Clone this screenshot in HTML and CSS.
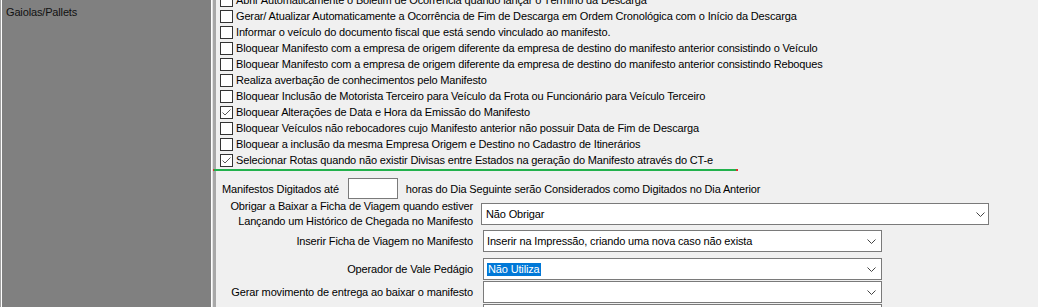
FILE: index.html
```html
<!DOCTYPE html>
<html lang="pt-BR">
<head>
    <meta charset="UTF-8">
    <title>Parâmetros do Manifesto</title>
    <link rel="stylesheet" href="styles.css">
</head>
<body>

    <div class="app">
        <aside class="sidebar">
            <div class="nav-item">Gaiolas/Pallets</div>
        </aside>
        <div class="splitter"></div>

        <main class="content">
            <div class="options">
                <label class="opt"><span class="box"></span>Abrir Automaticamente o Boletim de Ocorrência quando lançar o Término da Descarga</label>
                <label class="opt"><span class="box"></span>Gerar/ Atualizar Automaticamente a Ocorrência de Fim de Descarga em Ordem Cronológica com o Início da Descarga</label>
                <label class="opt"><span class="box"></span>Informar o veículo do documento fiscal que está sendo vinculado ao manifesto.</label>
                <label class="opt"><span class="box"></span>Bloquear Manifesto com a empresa de origem diferente da empresa de destino do manifesto anterior consistindo o Veículo</label>
                <label class="opt"><span class="box"></span>Bloquear Manifesto com a empresa de origem diferente da empresa de destino do manifesto anterior consistindo Reboques</label>
                <label class="opt"><span class="box"></span>Realiza averbação de conhecimentos pelo Manifesto</label>
                <label class="opt"><span class="box"></span>Bloquear Inclusão de Motorista Terceiro para Veículo da Frota ou Funcionário para Veículo Terceiro</label>
                <label class="opt"><span class="box checked"><svg width="11" height="11" viewBox="0 0 11 11"><polyline points="1.5,5.5 4,8 9.5,2.5" fill="none" stroke="#5a5a5a" stroke-width="1"/></svg></span>Bloquear Alterações de Data e Hora da Emissão do Manifesto</label>
                <label class="opt"><span class="box"></span>Bloquear Veículos não rebocadores cujo Manifesto anterior não possuir Data de Fim de Descarga</label>
                <label class="opt"><span class="box"></span>Bloquear a inclusão da mesma Empresa Origem e Destino no Cadastro de Itinerários</label>
                <label class="opt"><span class="box checked"><svg width="11" height="11" viewBox="0 0 11 11"><polyline points="1.5,5.5 4,8 9.5,2.5" fill="none" stroke="#5a5a5a" stroke-width="1"/></svg></span>Selecionar Rotas quando não existir Divisas entre Estados na geração do Manifesto através do CT-e</label>
            </div>
            <div class="focus-line"></div>

            <div class="form">
                <div class="inline-row">
                    <span>Manifestos Digitados até</span>
                    <span class="num-input"></span>
                    <span>horas do Dia Seguinte serão Considerados como Digitados no Dia Anterior</span>
                </div>

                <div class="field-row">
                    <div class="lbl">Obrigar a Baixar a Ficha de Viagem quando estiver<br>Lançando um Histórico de Chegada no Manifesto</div>
                    <div class="combo wide">
                        <span>Não Obrigar</span>
                        <svg class="chev" width="9" height="5" viewBox="0 0 9 5"><polyline points="0.5,0.5 4.5,4.5 8.5,0.5" fill="none" stroke="#444" stroke-width="1"/></svg>
                    </div>
                </div>

                <div class="field-row">
                    <div class="lbl">Inserir Ficha de Viagem no Manifesto</div>
                    <div class="combo">
                        <span>Inserir na Impressão, criando uma nova caso não exista</span>
                        <svg class="chev" width="9" height="5" viewBox="0 0 9 5"><polyline points="0.5,0.5 4.5,4.5 8.5,0.5" fill="none" stroke="#444" stroke-width="1"/></svg>
                    </div>
                </div>

                <div class="field-row spaced">
                    <div class="lbl">Operador de Vale Pedágio</div>
                    <div class="combo">
                        <span class="selected">Não Utiliza</span>
                        <svg class="chev" width="9" height="5" viewBox="0 0 9 5"><polyline points="0.5,0.5 4.5,4.5 8.5,0.5" fill="none" stroke="#444" stroke-width="1"/></svg>
                    </div>
                </div>

                <div class="field-row">
                    <div class="lbl">Gerar movimento de entrega ao baixar o manifesto</div>
                    <div class="combo">
                        <span></span>
                        <svg class="chev" width="9" height="5" viewBox="0 0 9 5"><polyline points="0.5,0.5 4.5,4.5 8.5,0.5" fill="none" stroke="#444" stroke-width="1"/></svg>
                    </div>
                </div>

                <div class="field-row">
                    <div class="lbl"></div>
                    <div class="combo"></div>
                </div>
            </div>
        </main>
    </div>

</body>
</html>
```

FILE: styles.css
```css
body {
    font-family: "Liberation Sans", Arial, sans-serif;
    font-size: 11px;
    letter-spacing: -0.15px;
    color: #000;
    background-color: #f0f0f0;
    margin: 0;
    height: 307px;
    overflow: hidden;
}
.app {
    display: flex;
    height: 307px;
}

.sidebar {
    width: 210px;
    flex-shrink: 0;
    background-color: #808080;
    border-left: 1px solid #a0a0a0;
    border-right: 1px solid #fff;
    box-shadow: inset 1px 0 #fff;
}
.nav-item {
    padding: 5px 0 0 5px;
    color: #111;
    line-height: 14px;
}
.splitter {
    width: 3px;
    flex-shrink: 0;
    background-color: #a8a8a8;
    border-left: 1px solid #e2e2e2;
}

.content {
    flex: 1;
    padding-left: 4px;
}
.options {
    margin-top: -8px;
}
.opt {
    display: flex;
    align-items: center;
    height: 16px;
    white-space: nowrap;
}
.box {
    width: 11px;
    height: 11px;
    border: 1px solid #333;
    background: #fff;
    margin-right: 3px;
    display: flex;
}
.focus-line {
    width: 525px;
    height: 2px;
    margin: 1px 0 0 -7px;
    background: linear-gradient(to right, #e03030 1px, #22b14c 1px, #22b14c 523px, #e03030 523px);
}

.form {
    padding: 7px 0 0 2px;
}
.inline-row {
    display: flex;
    align-items: center;
    white-space: nowrap;
}
.num-input {
    width: 48px;
    height: 19px;
    border: 1px solid #7a7a7a;
    background: #fff;
    margin: 0 8px 0 9px;
}
.field-row {
    display: grid;
    grid-template-columns: 251px 1fr;
    column-gap: 8px;
    align-items: center;
    margin-top: 1px;
}
.field-row:nth-child(2) {
    margin-top: 0;
}
.field-row.spaced {
    margin-top: 6px;
}
.lbl {
    text-align: right;
    line-height: 15px;
    white-space: nowrap;
}
.combo {
    width: 389px;
    height: 20px;
    margin-left: 2px;
    border: 1px solid #7a7a7a;
    background: #fff;
    display: flex;
    align-items: center;
    justify-content: space-between;
    padding: 0 5px 0 3px;
    white-space: nowrap;
}
.combo.wide {
    width: 499px;
    margin-left: 0;
    padding-left: 4px;
    padding-right: 3px;
}
.chev {
    flex-shrink: 0;
}
.selected {
    background-color: #0078d7;
    color: #fff;
    padding: 0 1px;
    line-height: 13px;
}
```
